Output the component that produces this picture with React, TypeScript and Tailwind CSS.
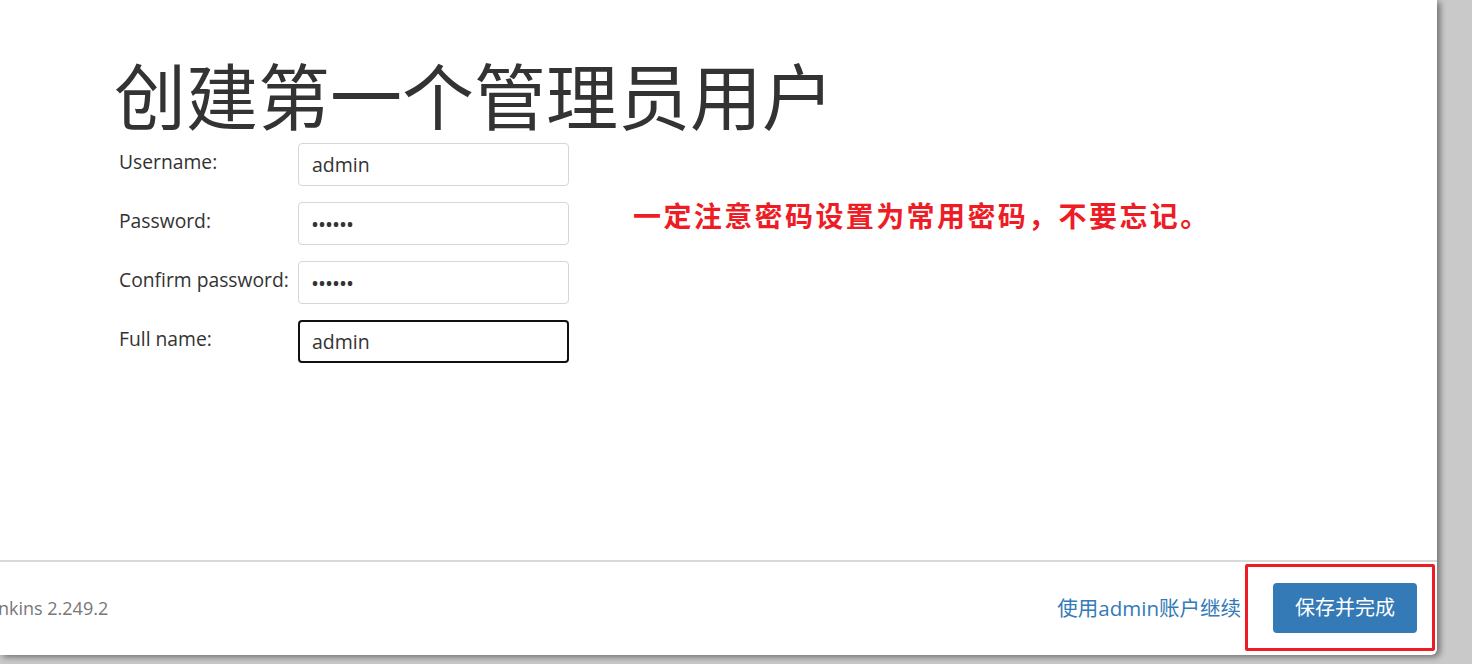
const fields = [
  { label: 'Username:', value: 'admin', type: 'text' },
  { label: 'Password:', value: '••••••', type: 'password' },
  { label: 'Confirm password:', value: '••••••', type: 'password' },
  { label: 'Full name:', value: 'admin', type: 'text', focused: true },
];

const font = { fontFamily: '"Open Sans", "Noto Sans CJK SC", sans-serif' };

export default function App() {
  return (
    <div className="w-full h-[664px] overflow-hidden bg-[#c9c9c9] flex" style={font}>
      <div className="w-[1437px] h-[655px] shrink-0 bg-white rounded-br-md shadow-[3px_2px_6px_rgba(0,0,0,0.45)] flex flex-col">
        {/* Main */}
        <div className="h-[560px] pl-[114px] pt-[49px] flex flex-col">
          <h1 className="text-[72px] leading-[94px] text-[#333] font-normal">创建第一个管理员用户</h1>
          <div className="flex gap-[64px]">
            <div className="flex flex-col gap-[16px] pl-[5px]">
              {fields.map((f) => (
                <div key={f.label} className="flex items-start">
                  <label className="w-[179px] pt-[6px] text-[19.3px] leading-[26px] text-[#333]">{f.label}</label>
                  <div
                    className={
                      f.focused
                        ? 'w-[271px] h-[43px] rounded-[4px] border-2 border-[#111] pl-[12px] flex items-center text-[19.5px] text-[#333]'
                        : 'w-[271px] h-[43px] rounded-[4px] border border-[#d6d6d6] pl-[13px] flex items-center text-[19.5px] text-[#333]'
                    }
                  >
                    {f.type === 'password' ? (
                      <span className="tracking-[1px] text-[16px] font-bold">{f.value}</span>
                    ) : (
                      f.value
                    )}
                  </div>
                </div>
              ))}
            </div>
            <p className="pt-[57px] text-[28px] leading-[32px] font-bold text-[#ee1c25] tracking-[2.4px]">
              一定注意密码设置为常用密码，不要忘记。
            </p>
          </div>
        </div>

        {/* Footer */}
        <div className="flex-1 border-t-2 border-[#d9d9d9] flex items-center justify-between">
          <span className="ml-[-17px] text-[18px] text-[#777]">Jenkins 2.249.2</span>
          <div className="flex items-center">
            <a className="text-[20.5px] text-[#337ab7] mr-[4px]">使用admin账户继续</a>
            <div className="mr-[2px] mt-[-2px] w-[190px] h-[87px] border-[3px] border-[#ee1c25] rounded-[2px] flex items-center justify-end pr-[15px]">
              <button className="w-[144px] h-[50px] rounded-[4px] bg-[#337ab7] text-white text-[20px]">保存并完成</button>
            </div>
          </div>
        </div>
      </div>
    </div>
  );
}
